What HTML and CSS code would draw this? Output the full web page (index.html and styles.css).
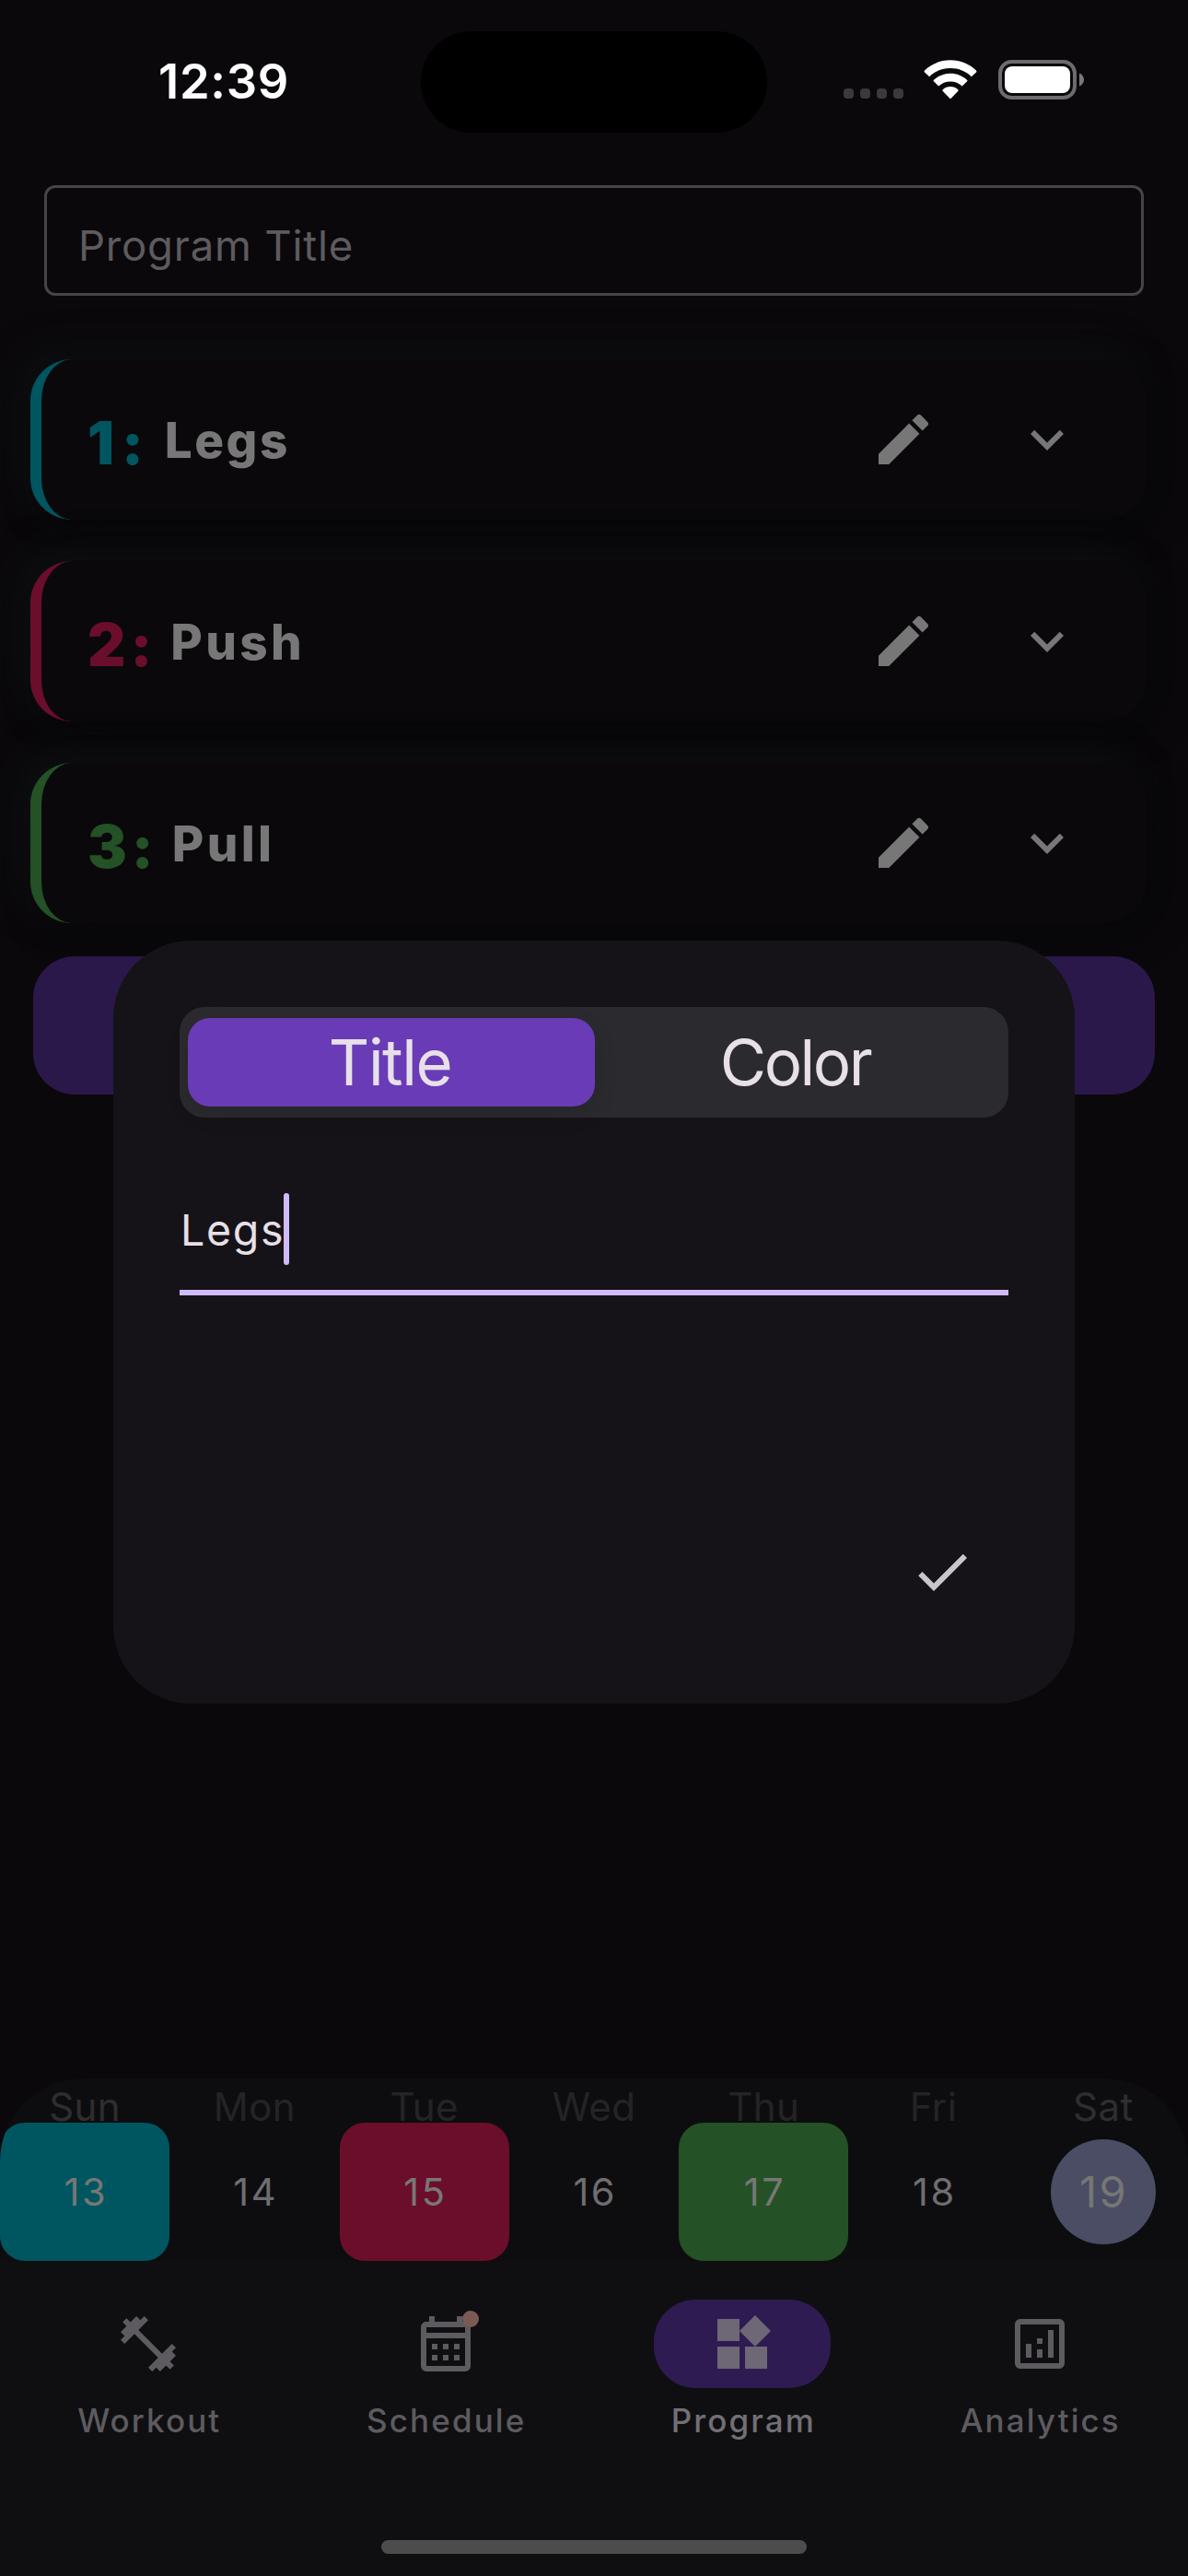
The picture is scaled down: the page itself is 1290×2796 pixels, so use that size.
FILE: index.html
```
<!DOCTYPE html>
<html lang="en">
<head>
<meta charset="utf-8">
<title>Program</title>
<link rel="stylesheet" href="styles.css">
</head>
<body>
<svg class="defs" aria-hidden="true">
  <symbol id="edit" viewBox="0 0 24 24"><path d="M3 17.25V21h3.75L17.81 9.94l-3.75-3.75L3 17.25zM20.71 7.04c.39-.39.39-1.02 0-1.41l-2.34-2.34a.9959.9959 0 0 0-1.41 0l-1.83 1.83 3.75 3.75 1.83-1.83z"/></symbol>
  <symbol id="expand" viewBox="0 0 24 24"><path d="M16.59 8.59L12 13.17 7.41 8.59 6 10l6 6 6-6z"/></symbol>
  <symbol id="check" viewBox="0 0 24 24"><path d="M9 16.17L4.83 12l-1.42 1.41L9 19 21 7l-1.41-1.41z"/></symbol>
  <symbol id="dumbbell" viewBox="0 0 24 24"><path d="M20.57 14.86L22 13.43 20.57 12 17 15.57 8.43 7 12 3.43 10.57 2 9.14 3.43 7.71 2 5.57 4.14 4.14 2.71 2.71 4.14l1.43 1.43L2 7.71l1.43 1.43L2 10.57 3.43 12 7 8.43 15.57 17 12 20.57 13.43 22l1.43-1.43L16.29 22l2.14-2.14 1.43 1.43 1.43-1.43-1.43-1.43L22 16.29z"/></symbol>
  <symbol id="calendar" viewBox="0 0 24 24"><path d="M19 4h-1V2h-2v2H8V2H6v2H5c-1.11 0-1.99.9-1.99 2L3 20a2 2 0 0 0 2 2h14c1.1 0 2-.9 2-2V6c0-1.1-.9-2-2-2zm0 16H5V10h14v10zm0-12H5V6h14v2zM9 14H7v-2h2v2zm4 0h-2v-2h2v2zm4 0h-2v-2h2v2zm-8 4H7v-2h2v2zm4 0h-2v-2h2v2zm4 0h-2v-2h2v2z"/></symbol>
  <symbol id="widgets" viewBox="0 0 24 24"><path d="M13 13v8h8v-8h-8zM3 21h8v-8H3v8zM3 3v8h8V3H3zm13.66-1.31L11 7.34 16.66 13l5.66-5.66-5.66-5.65z"/></symbol>
  <symbol id="analytics" viewBox="0 0 24 24"><path d="M19 3H5c-1.1 0-2 .9-2 2v14c0 1.1.9 2 2 2h14c1.1 0 2-.9 2-2V5c0-1.1-.9-2-2-2zm0 16H5V5h14v14zM7 12h2v5H7zm8-5h2v10h-2zm-4 7h2v3h-2zm0-4h2v2h-2z"/></symbol>
</svg>

<div class="screen">
  <header class="status">
    <div class="time">12:39</div>
    <div class="island"></div>
    <div class="indicators">
      <div class="signal"><i></i><i></i><i></i><i></i></div>
      <svg class="wifi" viewBox="0 0 58 43">
        <path fill="#fff" d="M29 0.3C40 0.3 50 4.6 57 11.6Q57.8 12.5 57 13.4L51.8 18.2C46 12.4 37.800 9.100 29 9.100S12 12.400 6.200 18.200L1 13.400Q.2 12.500 1 11.600C8 4.600 18 .3 29 .3z"/>
        <path fill="#fff" d="M29 14.700C36 14.700 42.500 17.400 47.200 21.900Q47.800 22.600 47.200 23.300L41.800 28.500C38.500 25.300 34 23.400 29 23.400S19.500 25.300 16.200 28.500L10.800 23.300Q10.200 22.600 10.800 21.900C15.500 17.400 22 14.700 29 14.700z"/>
        <path fill="#fff" d="M29 29C32.200 29 35 30.200 37.200 32.200Q38 33.100 37.200 34L29.700 41.700Q29 42.400 28.300 41.700L20.800 34Q20 33.100 20.800 32.200C23 30.200 25.800 29 29 29z"/>
      </svg>
      <svg class="battery" viewBox="0 0 94 43">
        <rect x="2" y="2" width="81" height="39" rx="12.500" fill="none" stroke="#6c6b6d" stroke-width="4"/>
        <rect x="7" y="7" width="71" height="29" rx="8" fill="#fff"/>
        <path d="M88 14.500C91 15.500 93 18.300 93 21.500S91 27.500 88 28.500z" fill="#79787a"/>
      </svg>
    </div>
  </header>

  <div class="title-field">Program Title</div>

  <main class="days">
    <section class="card cyan"><span class="num">1:</span><span class="name">Legs</span><svg class="icon"><use href="#edit"/></svg><svg class="icon"><use href="#expand"/></svg></section>
    <section class="card pink"><span class="num">2:</span><span class="name">Push</span><svg class="icon"><use href="#edit"/></svg><svg class="icon"><use href="#expand"/></svg></section>
    <section class="card green"><span class="num">3:</span><span class="name">Pull</span><svg class="icon"><use href="#edit"/></svg><svg class="icon"><use href="#expand"/></svg></section>
  </main>
  <div class="add-button"></div>

  <footer class="bottom">
    <div class="week">
      <div class="day"><span class="dow weekend">Sun</span><span class="date cyan">13</span></div>
      <div class="day"><span class="dow">Mon</span><span class="date">14</span></div>
      <div class="day"><span class="dow">Tue</span><span class="date pink">15</span></div>
      <div class="day"><span class="dow">Wed</span><span class="date">16</span></div>
      <div class="day"><span class="dow">Thu</span><span class="date green">17</span></div>
      <div class="day"><span class="dow">Fri</span><span class="date">18</span></div>
      <div class="day"><span class="dow weekend">Sat</span><span class="date"><b class="today">19</b></span></div>
    </div>
    <nav class="nav">
      <div class="tab"><span class="pill"><svg class="icon"><use href="#dumbbell"/></svg></span><span class="label">Workout</span></div>
      <div class="tab"><span class="pill"><svg class="icon"><use href="#calendar"/></svg><i class="badge"></i></span><span class="label">Schedule</span></div>
      <div class="tab active"><span class="pill"><svg class="icon"><use href="#widgets"/></svg></span><span class="label">Program</span></div>
      <div class="tab"><span class="pill"><svg class="icon"><use href="#analytics"/></svg></span><span class="label">Analytics</span></div>
    </nav>
    <div class="home"></div>
  </footer>

  <div class="dialog">
    <div class="segments">
      <div class="segment selected">Title</div>
      <div class="segment color-seg">Color</div>
    </div>
    <div class="text-input"><span>Legs</span><i class="caret"></i></div>
    <svg class="icon confirm"><use href="#check"/></svg>
  </div>
</div>
</body>
</html>
```
FILE: styles.css
```
* { box-sizing: border-box; }
body { margin: 0; background: #0a080b; font-family: Inter, "Liberation Sans", sans-serif; }
.defs { position: absolute; width: 0; height: 0; }
.icon { width: 72px; height: 72px; display: block; fill: currentColor; flex: none; }

.screen { position: relative; width: 1290px; height: 2796px; overflow: hidden; background: #0a080b; display: flex; flex-direction: column; }

/* status bar */
.status { height: 201px; flex: none; display: grid; grid-template-columns: 457px 376px 457px; align-items: start; }
.time { padding: 53px 0 0 172px; font-size: 52.500px; line-height: 71px; font-weight: 600; letter-spacing: 0.700px; color: #fff; }
.island { margin-top: 34px; height: 110px; border-radius: 55px; background: #000; }
.indicators { margin-top: 65px; padding-left: 83px; height: 43px; display: flex; align-items: flex-start; }
.signal { display: flex; gap: 7px; margin: 31px 22px 0 0; width: 65px; }
.signal i { width: 11px; height: 11px; border-radius: 4px; background: #3b393c; flex: none; }
.wifi { width: 58px; height: 43px; margin-right: 23px; flex: none; }
.battery { width: 94px; height: 43px; flex: none; }

.title-field { flex: none; margin: 0 48px; height: 120px; border: 3px solid #464447; border-radius: 12px; padding: 8px 0 0 34px; font-size: 45.500px; line-height: 109px; letter-spacing: 0.800px; color: #5d5b5e; }

/* workout day cards */
.days { flex: none; margin: 69px 45px 0 33px; display: flex; flex-direction: column; gap: 45px; }
.card { height: 174px; border-radius: 45px; border-left: 12px solid; background: #0a080b; display: flex; align-items: center; padding: 0 72px 0 51px; box-shadow: 12px 12px 36px #070708, -12px -12px 36px #0f1113; }
.num { font-size: 64px; font-weight: 900; letter-spacing: 5px; line-height: 80px; margin: 8px 15px 0 -1px; }
.name { flex: 1; font-size: 53px; font-weight: 800; letter-spacing: 3.400px; line-height: 72px; margin-top: 1px; color: #777; }
.card .icon { color: #777; }
.card .icon + .icon { margin-left: 84px; }
.card.cyan { border-color: #005660; }
.card.cyan .num { color: #005660; letter-spacing: 8px; }
.card.cyan .name { letter-spacing: 2.500px; }
.card.pink { border-color: #6b0e2b; }
.card.pink .num { color: #6b0e2b; }
.card.green { border-color: #245126; }
.card.green .num { color: #245126; }
.add-button { flex: none; margin: 36px 36px 0; height: 150px; border-radius: 45px; background: #2b184a; }

/* week strip */
.bottom { margin-top: auto; height: 540px; flex: none; background: #0d0d0f; border-radius: 90px 90px 0 0; overflow: hidden; }
.week { height: 198px; display: grid; grid-template-columns: repeat(7, 1fr); }
.day { display: grid; grid-template-rows: 48px 150px; }
.dow { text-align: center; font-size: 42px; line-height: 61px; letter-spacing: 0.400px; color: #242425; }
.dow.weekend { color: #2f2e2f; }
.date { border-radius: 27px; display: flex; align-items: center; justify-content: center; font-size: 41.500px; letter-spacing: 2.600px; padding-left: 2.600px; color: #6f6d70; }
.date.cyan, .date.pink, .date.green { color: #777; }
.date.cyan { background: #005660; }
.date.pink { background: #6b0e2b; }
.date.green { background: #245126; }
.today { width: 114px; height: 114px; margin-left: -3px; border-radius: 50%; background: #4a4d64; color: #767674; font-size: 47px; font-weight: 400; line-height: 114px; text-align: center; padding-left: 2px; }

/* navigation bar */
.nav { height: 303px; background: #0f0f11; display: grid; grid-template-columns: repeat(4, 1fr); padding-top: 42px; }
.tab { display: flex; flex-direction: column; align-items: center; color: #5d5b5f; }
.pill { position: relative; width: 192px; height: 96px; border-radius: 45px; display: flex; align-items: center; justify-content: center; }
.badge { position: absolute; left: 114px; top: 12px; width: 18px; height: 18px; border-radius: 50%; background: #7c5a54; }
.label { margin-top: 11px; font-size: 35px; font-weight: 500; line-height: 48px; letter-spacing: 2.100px; padding-left: 2px; }
.tab.active .pill { background: #2e1b52; color: #6e6775; }
.tab.active .label { color: #736f74; }
.home { height: 39px; background: #0f0f11; display: flex; justify-content: center; align-items: flex-start; }
.home::before { content: ""; width: 462px; height: 15px; border-radius: 8px; background: #4c4c4c; }

/* rename dialog, over the page */
.dialog { position: absolute; left: 123px; top: 1021px; width: 1044px; height: 828px; border-radius: 84px; background: #151317; padding: 72px; display: flex; flex-direction: column; }
.segments { height: 120px; border-radius: 27px; background: #2b2a2e; display: grid; grid-template-columns: 442px 1fr; padding: 12px 9px; }
.segment { display: flex; align-items: center; justify-content: center; font-size: 69px; letter-spacing: -1.500px; padding-right: 3px; color: #e7e0e8; }
.segment.selected { border-radius: 24px; background: #693bb6; box-shadow: 0 9px 24px rgba(0, 0, 0, 0.12); }
.segment.color-seg { letter-spacing: -2.500px; padding-right: 5px; }
.text-input { height: 193px; border-bottom: 6px solid #d0bafa; padding-top: 82px; display: flex; align-items: flex-start; font-size: 46.500px; line-height: 80px; letter-spacing: 1.700px; padding-left: 1px; color: #e7e0e8; }
.caret { width: 6px; height: 78px; margin-left: -1px; border-radius: 3px; background: #d0bafa; }
.confirm { color: #cac4cc; margin: 264px 36px 0 auto; }
```
